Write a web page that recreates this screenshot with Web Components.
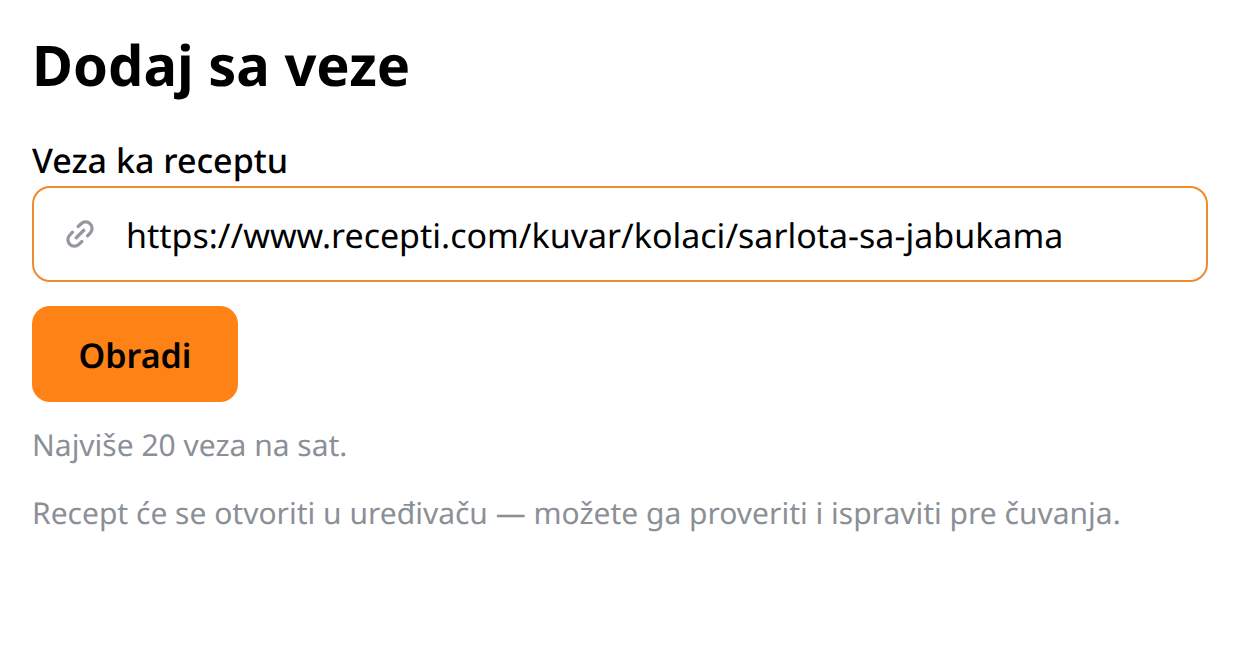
<!DOCTYPE html>
<html lang="sr">
<head>
<meta charset="utf-8">
<style>
  html, body { margin: 0; background: #fff; }
  body { font-family: "Noto Sans", sans-serif; text-rendering: geometricPrecision; }
</style>
</head>
<body>
<link-form></link-form>
<script>
const inputTemplate = document.createElement('template');
inputTemplate.innerHTML = `
  <style>
    :host { display: block; }
    label { display: block; font-size: 34px; line-height: 48px; font-weight: 500; color: #000; margin-bottom: 2px; }
    .box {
      display: flex; align-items: center; height: 92px;
      border: 2px solid #ee8a2f; border-radius: 18px; padding: 0 32px; gap: 30px;
    }
    svg { width: 30px; height: 30px; flex: none; margin-left: -1px; margin-right: 1px; color: #94989e; }
    span { font-size: 34px; line-height: 48px; padding-top: 2px; color: #000; white-space: nowrap; }
  </style>
  <label><slot name="label"></slot></label>
  <div class="box">
    <svg viewBox="0 0 24 24" fill="none" stroke="currentColor" stroke-width="2.6" stroke-linecap="round" stroke-linejoin="round">
      <path d="M10.5 6l2.4-2.2a5.2 5.2 0 0 1 7.400 7.300L18 13.500"/>
      <path d="M6 10.500l-2.300 2.500a5.200 5.200 0 0 0 7.400 7.300L13.500 18"/>
      <path d="M9 15l6-6"/>
    </svg>
    <span><slot></slot></span>
  </div>
`;

class LinkInput extends HTMLElement {
  constructor() {
    super();
    this.attachShadow({ mode: 'open' });
    this.shadowRoot.appendChild(inputTemplate.content.cloneNode(true));
  }
}

const buttonTemplate = document.createElement('template');
buttonTemplate.innerHTML = `
  <style>
    :host {
      display: inline-flex; align-items: center; justify-content: center;
      width: 206px; height: 96px; border-radius: 18px; background: #ff8216;
      color: #000; font-size: 34px; font-weight: 600;
    }
    span { padding-top: 2px; }
  </style>
  <span><slot></slot></span>
`;

class OrangeButton extends HTMLElement {
  constructor() {
    super();
    this.attachShadow({ mode: 'open' });
    this.shadowRoot.appendChild(buttonTemplate.content.cloneNode(true));
  }
}

const formTemplate = document.createElement('template');
formTemplate.innerHTML = `
  <style>
    :host { display: block; padding: 23px 32px 0; font-family: "Noto Sans", sans-serif; }
    h1 { margin: 0 0 29px; font-size: 56px; line-height: 84px; font-weight: 700; color: #000; }
    link-input { margin-bottom: 24px; }
    orange-button { display: flex; }
    p { margin: 0; font-size: 30px; line-height: 44px; color: #8b9097; }
    .first { margin-top: 21px; }
    .second { margin-top: 24px; }
  </style>
  <h1>Dodaj sa veze</h1>
  <link-input>
    <span slot="label">Veza ka receptu</span>
    https://www.recepti.com/kuvar/kolaci/sarlota-sa-jabukama
  </link-input>
  <orange-button>Obradi</orange-button>
  <p class="first">Najviše 20 veza na sat.</p>
  <p class="second">Recept će se otvoriti u uređivaču — možete ga proveriti i ispraviti pre čuvanja.</p>
`;

class LinkForm extends HTMLElement {
  constructor() {
    super();
    this.attachShadow({ mode: 'open' });
    this.shadowRoot.appendChild(formTemplate.content.cloneNode(true));
  }
}

customElements.define('link-input', LinkInput);
customElements.define('orange-button', OrangeButton);
customElements.define('link-form', LinkForm);
</script>
</body>
</html>
